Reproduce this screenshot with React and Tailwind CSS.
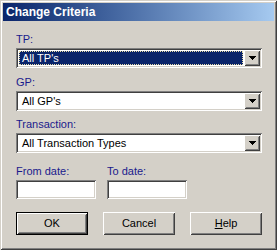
const raised =
  'shadow-[inset_1px_1px_#ffffff,inset_-1px_-1px_#404040,inset_2px_2px_#d4d0c8,inset_-2px_-2px_#808080]';
const sunken =
  'shadow-[inset_1px_1px_#808080,inset_-1px_-1px_#ffffff,inset_2px_2px_#404040,inset_-2px_-2px_#d4d0c8]';

function Arrow() {
  return (
    <svg width="7" height="4" viewBox="0 0 7 4" className="block">
      <path d="M0 0h7v1H0zM1 1h5v1H1zM2 2h3v1H2zM3 3h1v1H3z" fill="#000" />
    </svg>
  );
}

function Combo({ value, focused }) {
  return (
    <div className={`flex h-[20px] w-[246px] bg-white p-[2px] ${sunken}`}>
      <div className="flex flex-1 items-center">
        {focused ? (
          <div className="ml-[1px] mr-[1px] flex h-[14px] flex-1 items-center border border-dotted border-[#e8dca8] bg-[#0a246a] pl-[2px] text-white">
            {value}
          </div>
        ) : (
          <div className="pl-[4px]">{value}</div>
        )}
      </div>
      <div className={`flex h-[16px] w-[16px] items-center justify-center bg-[#d4d0c8] ${raised}`}>
        <Arrow />
      </div>
    </div>
  );
}

function Label({ children, className = '' }) {
  return <div className={`h-[13px] leading-[13px] text-[#1a1a8c] ${className}`}>{children}</div>;
}

function Button({ children, isDefault }) {
  if (isDefault) {
    return (
      <div className="h-[23px] w-[72px] border border-black">
        <div className={`flex h-full w-full items-center justify-center bg-[#d4d0c8] ${raised}`}>{children}</div>
      </div>
    );
  }
  return (
    <div className={`flex h-[23px] w-[72px] items-center justify-center bg-[#d4d0c8] ${raised}`}>{children}</div>
  );
}

export default function App() {
  return (
    <div
      className={`flex h-[250px] w-[277px] flex-col bg-[#d4d0c8] p-[3px] text-[11px] text-black shadow-[inset_1px_1px_#d4d0c8,inset_-1px_-1px_#404040,inset_2px_2px_#ffffff,inset_-2px_-2px_#808080]`}
      style={{ fontFamily: '"Liberation Sans", Arial, sans-serif' }}
    >
      <div className="flex h-[18px] items-center bg-gradient-to-r from-[#0a246a] to-[#a6caf0] pl-[3px] text-[12px] font-bold text-white">
        Change Criteria
      </div>

      <div className="flex flex-col pl-[13px]">
        <Label className="mt-[12px]">TP:</Label>
        <div className="mt-[2px]">
          <Combo value="All TP's" focused />
        </div>

        <Label className="mt-[8px]">GP:</Label>
        <div className="mt-[2px]">
          <Combo value="All GP's" />
        </div>

        <Label className="mt-[7px]">Transaction:</Label>
        <div className="mt-[2px]">
          <Combo value="All Transaction Types" />
        </div>

        <div className="mt-[12px] flex gap-[11px]">
          <div className="flex flex-col">
            <Label>From date:</Label>
            <div className={`mt-[2px] h-[19px] w-[80px] bg-white ${sunken}`} />
          </div>
          <div className="flex flex-col">
            <Label>To date:</Label>
            <div className={`mt-[2px] h-[19px] w-[80px] bg-white ${sunken}`} />
          </div>
        </div>

        <div className="mt-[13px] flex gap-[15px]">
          <Button isDefault>OK</Button>
          <Button>Cancel</Button>
          <Button>
            <span>
              <span className="underline">H</span>elp
            </span>
          </Button>
        </div>
      </div>
    </div>
  );
}
